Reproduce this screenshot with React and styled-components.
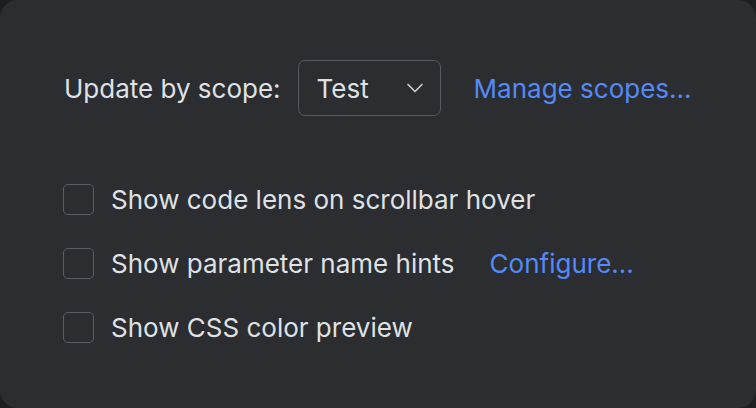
import React, { useState } from "react";
import styled, { createGlobalStyle } from "styled-components";

const GlobalStyle = createGlobalStyle`
  html, body {
    margin: 0;
    padding: 0;
    background: #1e1f22;
  }
  body {
    font-family: Inter, "Noto Sans", sans-serif;
  }
`;

const Panel = styled.div`
  box-sizing: border-box;
  width: 756px;
  height: 408px;
  background: #2b2d30;
  border-radius: 18px;
  padding: 60px 63px 0 64px;
  color: #dfe1e5;
  font-size: 26px;
  display: flex;
  flex-direction: column;
`;

const ScopeRow = styled.div`
  display: flex;
  align-items: center;
  height: 56px;
`;

const Label = styled.span`
  margin-right: 17px;
`;

const Select = styled.button`
  box-sizing: border-box;
  width: 143px;
  height: 56px;
  display: flex;
  align-items: center;
  justify-content: space-between;
  padding: 0 16px 0 18px;
  background: transparent;
  border: 1.5px solid #575a60;
  border-radius: 7px;
  color: #dfe1e5;
  font: inherit;
  margin-right: 33px;
  cursor: pointer;
`;

const Link = styled.a`
  color: #548af7;
  cursor: pointer;
  text-decoration: none;
`;

const Options = styled.div`
  display: flex;
  flex-direction: column;
  gap: 33px;
  margin-top: 68px;
  margin-left: -1px;
`;

const OptionRow = styled.label`
  display: flex;
  align-items: center;
  height: 31px;
  cursor: pointer;
`;

const Box = styled.span`
  box-sizing: border-box;
  width: 31px;
  height: 31px;
  border: 1.5px solid #5a5d63;
  border-radius: 5px;
  margin-right: 17px;
  flex-shrink: 0;
  background: ${(p) => (p.checked ? "#3574f0" : "transparent")};
`;

const Extra = styled(Link)`
  margin-left: 35px;
`;

const Chevron = () => (
  <svg width="18" height="18" viewBox="0 0 18 18" fill="none">
    <path d="M2 5.5l7 7 7-7" stroke="#c9ccd1" strokeWidth="1.7" strokeLinecap="round" strokeLinejoin="round" />
  </svg>
);

const options = [
  { id: "lens", text: "Show code lens on scrollbar hover" },
  { id: "hints", text: "Show parameter name hints", link: "Configure..." },
  { id: "css", text: "Show CSS color preview" },
];

const App = () => {
  const [checked, setChecked] = useState({});
  const toggle = (id) => setChecked((c) => ({ ...c, [id]: !c[id] }));

  return (
    <>
      <GlobalStyle />
      <Panel>
        <ScopeRow>
          <Label>Update by scope:</Label>
          <Select>
            <span>Test</span>
            <Chevron />
          </Select>
          <Link>Manage scopes...</Link>
        </ScopeRow>
        <Options>
          {options.map((o) => (
            <OptionRow key={o.id} onClick={() => toggle(o.id)}>
              <Box checked={checked[o.id]} />
              <span>{o.text}</span>
              {o.link && <Extra>{o.link}</Extra>}
            </OptionRow>
          ))}
        </Options>
      </Panel>
    </>
  );
};

export default App;
